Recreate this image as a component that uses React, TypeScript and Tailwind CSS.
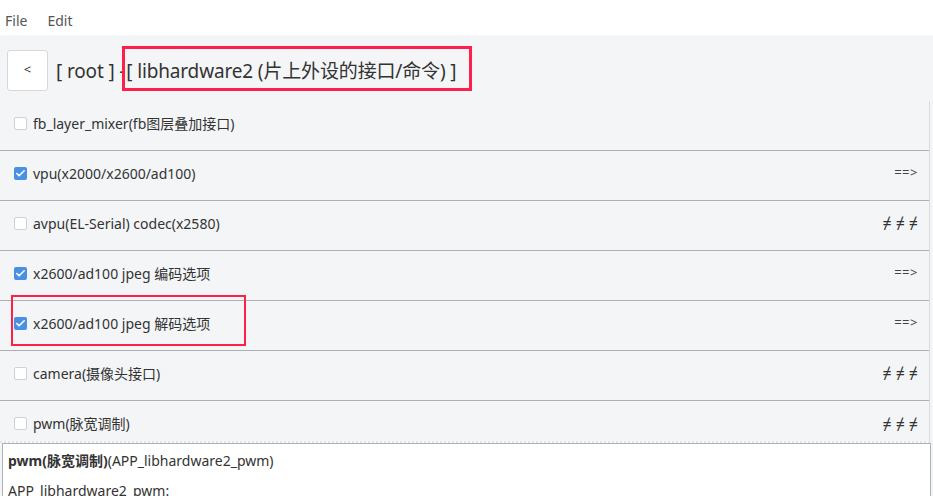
import { Check } from "lucide-react";

const items = [
  { label: "fb_layer_mixer(fb图层叠加接口)", checked: false, tail: "" },
  { label: "vpu(x2000/x2600/ad100)", checked: true, tail: "==>" },
  { label: "avpu(EL-Serial) codec(x2580)", checked: false, tail: "≠≠≠" },
  { label: "x2600/ad100 jpeg 编码选项", checked: true, tail: "==>" },
  { label: "x2600/ad100 jpeg 解码选项", checked: true, tail: "==>", mark: true },
  { label: "camera(摄像头接口)", checked: false, tail: "≠≠≠" },
  { label: "pwm(脉宽调制)", checked: false, tail: "≠≠≠" },
];

const font = {
  fontFamily: '"Noto Sans", "Noto Sans CJK SC", sans-serif',
};

function Box({ checked }: { checked: boolean }) {
  if (checked) {
    return (
      <span className="flex h-[13px] w-[13px] shrink-0 items-center justify-center rounded-[2px] bg-[#4a90e2]">
        <Check size={11} strokeWidth={3.5} className="text-white" />
      </span>
    );
  }
  return <span className="h-[13px] w-[13px] shrink-0 rounded-[2px] border border-[#cfd1d4] bg-white" />;
}

function Tail({ text }: { text: string }) {
  if (text === "≠≠≠") {
    return (
      <span className="flex gap-[4px] pb-[5px] text-[16px] leading-none text-[#333]">
        <span>≠</span>
        <span>≠</span>
        <span>≠</span>
      </span>
    );
  }
  return <span className="pb-[5px] text-[13px] tracking-[0.5px] text-[#444]">{text}</span>;
}

export default function App() {
  return (
    <div className="h-[496px] w-[933px] overflow-hidden bg-[#f4f5f7] text-[#333]" style={font}>
      {/* menu bar */}
      <div className="flex h-[35px] items-center gap-[20px] bg-white px-[5px] pt-[6px] text-[14px] text-[#555]">
        <span>File</span>
        <span>Edit</span>
      </div>

      {/* breadcrumb */}
      <div className="flex h-[66px] items-center pl-[7px] pt-[4px]">
        <button className="flex h-[41px] w-[41px] items-center justify-center rounded-[3px] border border-[#d6d8db] bg-white text-[13px]">
          &lt;
        </button>
        <div className="ml-[8px] flex items-center pt-[2px] text-[19px] tracking-[-0.15px] text-[#333]">
          <span>[ root ] -</span>
          <span className="relative">
            <span className="absolute -left-[3px] -top-[11px] h-[45px] w-[350px] border-[3px] border-[#ff1f4b]" />
            <span className="pl-[1px]">[ libhardware2 (片上外设的接口/命令) ]</span>
          </span>
        </div>
      </div>

      {/* list */}
      <div className="h-[340px] w-[930px] overflow-hidden border-r border-[#d9dbde]">
        {items.map((it, i) => (
          <div
            key={i}
            className={
              "relative flex h-[50px] items-center justify-between pl-[14px] pr-[11px] text-[14px] " +
              (i < items.length - 1 ? "border-b border-[#aeb0b3]" : "")
            }
          >
            {it.mark && (
              <span className="absolute left-[11px] top-[-6px] h-[51px] w-[235px] border-2 border-[#ff1f4b]" />
            )}
            <div className="flex items-center gap-[6px] pb-[5px]">
              <Box checked={it.checked} />
              <span>{it.label}</span>
            </div>
            <Tail text={it.tail} />
          </div>
        ))}
      </div>
      <div className="h-[2px] w-[930px] bg-[repeating-linear-gradient(90deg,#e3e5e8_0px,#e3e5e8_2px,#f8f9fa_2px,#f8f9fa_4px)]" />

      {/* detail panel */}
      <div className="ml-[2px] h-[60px] w-[929px] border border-[#aeb0b3] bg-white px-[5px] pt-[6px] text-[14px] text-[#333]">
        <div>
          <span className="font-bold">pwm(脉宽调制)</span>(APP_libhardware2_pwm)
        </div>
        <div className="mt-[9px]">APP_libhardware2_pwm:</div>
      </div>
    </div>
  );
}
